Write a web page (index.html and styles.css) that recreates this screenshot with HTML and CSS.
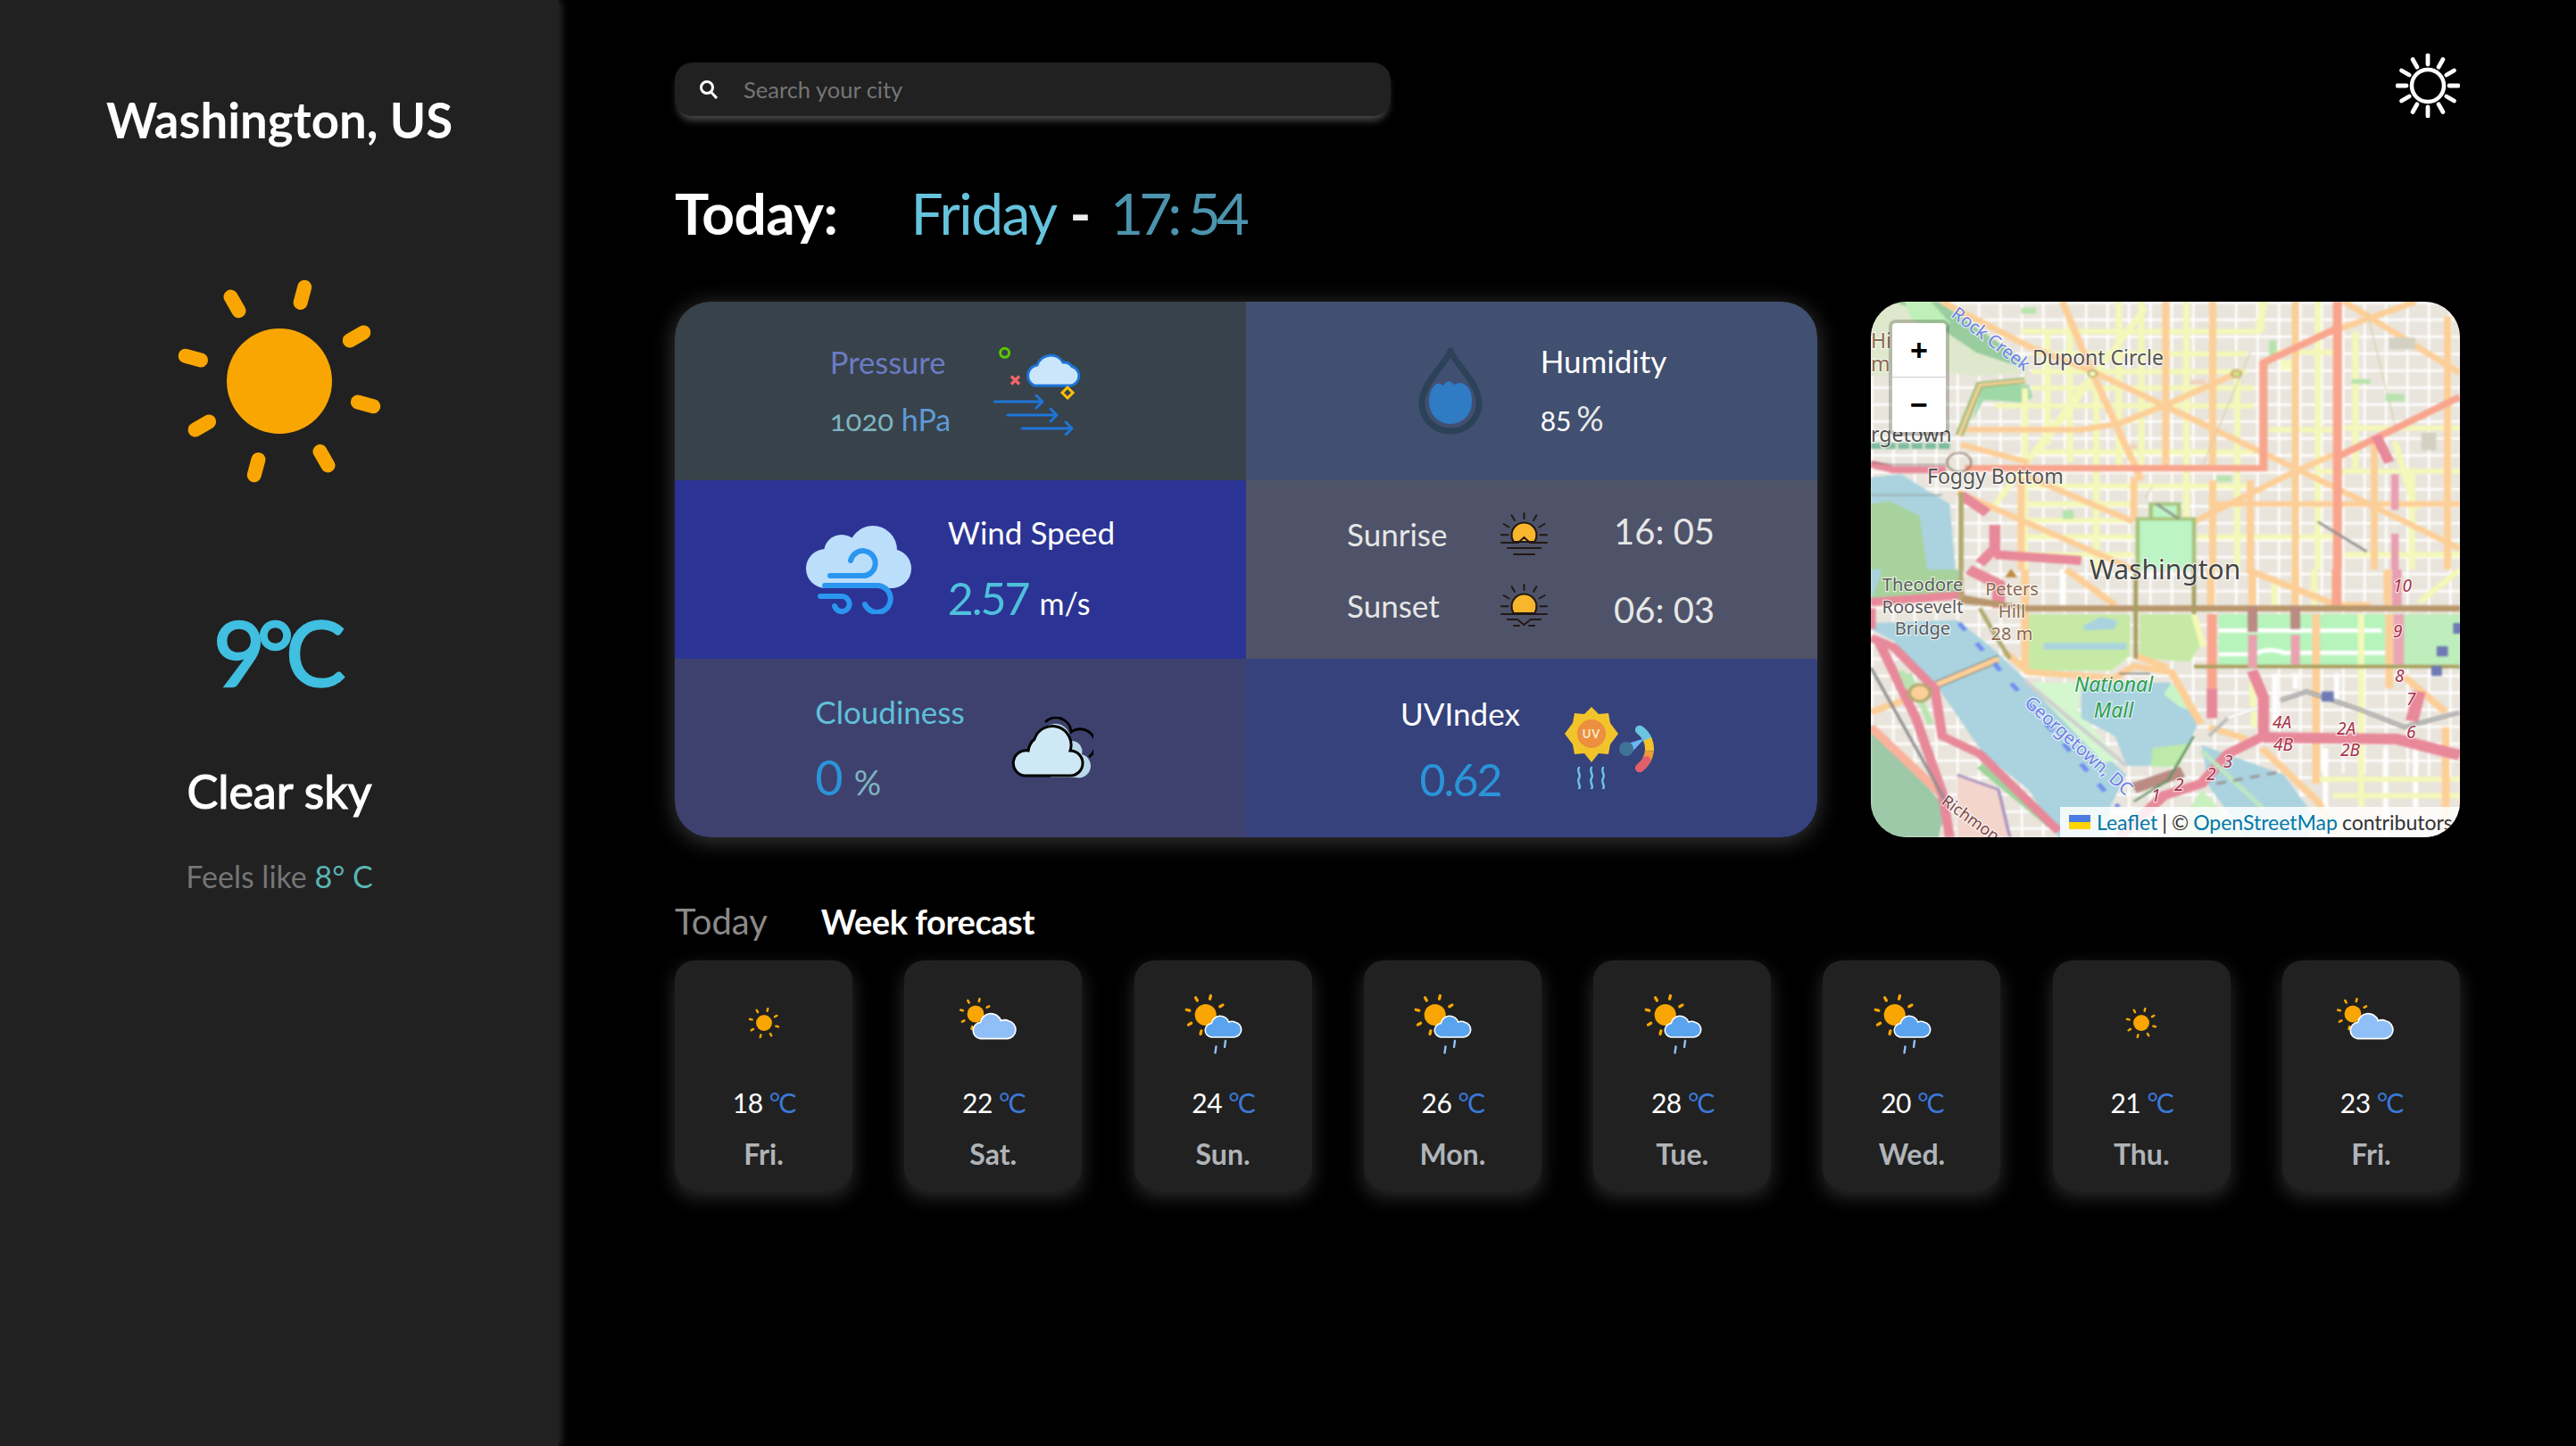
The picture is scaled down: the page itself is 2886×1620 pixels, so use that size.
FILE: index.html
```html
<!DOCTYPE html>
<html lang="en">
<head>
<meta charset="utf-8">
<title>Weather</title>
<link rel="stylesheet" href="styles.css">
</head>
<body>
<svg class="defs" width="0" height="0" aria-hidden="true">
  <defs>
    <symbol id="sun" viewBox="0 0 250 250">
      <circle cx="125" cy="125" r="59" fill="#f9a602"/>
      <g stroke="#f9a602" stroke-width="16" stroke-linecap="round">
        <line x1="125" y1="16" x2="125" y2="34" transform="rotate(15 125 125)"/>
        <line x1="125" y1="16" x2="125" y2="34" transform="rotate(60 125 125)"/>
        <line x1="125" y1="16" x2="125" y2="34" transform="rotate(105 125 125)"/>
        <line x1="125" y1="16" x2="125" y2="34" transform="rotate(150 125 125)"/>
        <line x1="125" y1="16" x2="125" y2="34" transform="rotate(195 125 125)"/>
        <line x1="125" y1="16" x2="125" y2="34" transform="rotate(240 125 125)"/>
        <line x1="125" y1="16" x2="125" y2="34" transform="rotate(285 125 125)"/>
        <line x1="125" y1="16" x2="125" y2="34" transform="rotate(330 125 125)"/>
      </g>
    </symbol>
    <symbol id="wx-clear" viewBox="0 0 86 68">
      <use href="#sun" x="24" y="14" width="38" height="38"/>
    </symbol>
    <symbol id="wx-clouds" viewBox="0 0 86 68">
      <use href="#sun" x="3" y="3" width="40" height="40"/>
      <path transform="translate(-7.2 -7.2) scale(1.18)" d="M30 49H55.5A8.5 8.5 0 0 0 57 32.2 8.5 8.5 0 0 0 49.6 32 10 10 0 0 0 30.3 33.5 7.8 7.8 0 0 0 30 49Z" fill="#90bff7" stroke="#fff" stroke-width="1.4"/>
    </symbol>
    <symbol id="wx-rain" viewBox="0 0 86 68">
      <use href="#sun" x="-1.8" y="-1.5" width="51" height="51"/>
      <path d="M30 49H55.5A8.5 8.5 0 0 0 57 32.2 8.5 8.5 0 0 0 49.6 32 10 10 0 0 0 30.3 33.5 7.8 7.8 0 0 0 30 49Z" fill="#5aa3ee" stroke="#fff" stroke-width="1.6"/>
      <g stroke="#90bff7" stroke-width="2.4" stroke-linecap="round">
        <line x1="46" y1="53" x2="45" y2="60"/>
        <line x1="35.5" y1="59.5" x2="34.5" y2="66.5"/>
      </g>
    </symbol>
    <symbol id="sunhalf" viewBox="0 0 53 48">
      <path d="M14.7 33A14 14 0 1 1 38.300 33Z" fill="#f8b62d" stroke="#231815" stroke-width="2"/>
      <g stroke="#231815" stroke-width="2" stroke-linecap="round">
        <line x1="26.500" y1="1" x2="26.500" y2="7"/>
        <line x1="12.600" y1="3.300" x2="16" y2="9"/>
        <line x1="40.400" y1="3.300" x2="37" y2="9"/>
        <line x1="3.500" y1="13" x2="9.500" y2="16.500"/>
        <line x1="49.500" y1="13" x2="43.500" y2="16.500"/>
        <line x1="0.500" y1="25.300" x2="8.500" y2="25.300"/>
        <line x1="44.500" y1="25.300" x2="52.500" y2="25.300"/>
      </g>
    </symbol>
  </defs>
</svg>

<div class="app">
  <aside class="sidebar">
    <h1 class="city">Washington, US</h1>
    <svg class="hero-sun" width="250" height="250"><use href="#sun"/></svg>
    <div class="hero-temp">9°C</div>
    <div class="hero-desc">Clear sky</div>
    <div class="hero-feels">Feels like <span class="feels-val">8° C</span></div>
  </aside>

  <main class="main">
    <div class="topbar">
      <div class="search">
        <svg class="search-icon" width="22" height="22" viewBox="0 0 22 22" fill="none" stroke="#fff" stroke-width="3"><circle cx="9" cy="9" r="6.500"/><line x1="13.500" y1="14" x2="20" y2="21"/></svg>
        <span class="search-ph">Search your city</span>
      </div>
      <svg class="theme" width="72" height="72" viewBox="0 0 72 72" fill="none" stroke="#fff" stroke-linecap="round">
        <circle cx="36" cy="36" r="18" stroke-width="4.500"/>
        <g stroke-width="4.800">
          <line x1="36" y1="2" x2="36" y2="12"/><line x1="36" y1="60" x2="36" y2="70"/>
          <line x1="2" y1="36" x2="12" y2="36"/><line x1="60" y1="36" x2="70" y2="36"/>
          <line x1="19" y1="6.500" x2="24" y2="15.200"/><line x1="48" y1="56.800" x2="53" y2="65.500"/>
          <line x1="53" y1="6.500" x2="48" y2="15.200"/><line x1="24" y1="56.800" x2="19" y2="65.500"/>
          <line x1="6.500" y1="19" x2="15.200" y2="24"/><line x1="56.800" y1="48" x2="65.500" y2="53"/>
          <line x1="65.500" y1="19" x2="56.800" y2="24"/><line x1="15.200" y1="48" x2="6.500" y2="53"/>
        </g>
      </svg>
    </div>

    <h2 class="today"><span class="today-label">Today:</span><span class="today-day">Friday</span> <span class="today-dash">-</span> <span class="today-time">17: 54</span></h2>

    <section class="panels">
      <div class="metrics">
        <div class="cell c-pressure">
          <div class="stack">
            <div class="label l-indigo">Pressure</div>
            <div class="small"><span class="v-teal">1020</span> <span class="v-sky">hPa</span></div>
          </div>
          <svg width="99" height="100" viewBox="0 0 99 100" fill="none">
            <circle cx="12.600" cy="7.300" r="5" stroke="#5ac800" stroke-width="3"/>
            <path d="M20 34l9 9M29 34l-9 9" transform="translate(0 -.500)" stroke="#f56565" stroke-width="3.200"/>
            <path d="M46 44H86A11 11 0 0 0 88 22.500 11 11 0 0 0 78 18 16 16 0 0 0 49 21 12 12 0 0 0 46 44Z" fill="#cbe6fb" stroke="#1e74d8" stroke-width="3"/>
            <path d="M83 46l6 6-6 6-6-6Z" stroke="#ffc107" stroke-width="3"/>
            <g stroke="#1e74d8" stroke-width="3" stroke-linecap="round" stroke-linejoin="round">
              <path d="M1 62H55M48 55l7 7-7 7"/>
              <path d="M16 77H71M64 70l7 7-7 7"/>
              <path d="M32 92H88M81 85l7 7-7 7"/>
            </g>
          </svg>
        </div>
        <div class="cell c-humidity">
          <svg width="72" height="98" viewBox="0 0 72 98">
            <path d="M36 4C30 20 4 40 4 63A32 31 0 0 0 68 63C68 40 42 20 36 4Z" fill="none" stroke="#2c4258" stroke-width="7" stroke-linejoin="round"/>
            <path d="M17 44C21 39 24 40 28 43 32 37 36 37 40 42 45 39 50 39 55 44 60 50 60 56 60 62A24 24 0 0 1 12 62C12 55 13 49 17 44Z" fill="#2f7bc4"/>
          </svg>
          <div class="stack">
            <div class="label l-white">Humidity</div>
            <div class="small s-white"><span class="num-sm">85</span> <span class="pct">%</span></div>
          </div>
        </div>
        <div class="cell c-wind">
          <svg width="118" height="99" viewBox="0 0 118 99" fill="none">
            <g fill="#bbdefb">
              <circle cx="22" cy="48" r="22"/><circle cx="96" cy="48" r="22"/><circle cx="75" cy="27" r="27"/><circle cx="40" cy="30" r="20"/><rect x="20" y="34" width="78" height="36"/>
            </g>
            <g stroke="#2a96f0" stroke-width="6" stroke-linecap="round">
              <path d="M27 56H62A14 14 0 1 0 50 39"/>
              <path d="M21 67H80A15 15 0 1 1 66 88"/>
              <path d="M16 79H40A8.500 8.500 0 1 1 32 90"/>
            </g>
          </svg>
          <div class="stack">
            <div class="label l-white">Wind Speed</div>
            <div class="big-row"><span class="big v-cyan">2.57</span> <span class="unit-white">m/s</span></div>
          </div>
        </div>
        <div class="cell c-sun">
          <div class="sun-grid">
            <span class="sun-label">Sunrise</span>
            <svg width="53" height="48" viewBox="0 0 53 48" fill="none">
              <use href="#sunhalf" width="53" height="48"/>
              <g stroke="#231815" stroke-width="2" stroke-linecap="round">
                <path d="M1 34H20L26.500 28 33 34H52"/><path d="M8 40H45"/><path d="M15 47H38"/>
              </g>
            </svg>
            <span class="sun-time t-up">16: 05</span>
            <span class="sun-label">Sunset</span>
            <svg width="53" height="48" viewBox="0 0 53 48" fill="none">
              <use href="#sunhalf" width="53" height="48"/>
              <g stroke="#231815" stroke-width="2" stroke-linecap="round">
                <path d="M1 34H52"/><path d="M8 40H19L26.500 46 34 40H45"/><path d="M15 47H21M32 47H38"/>
              </g>
            </svg>
            <span class="sun-time t-down">06: 03</span>
          </div>
        </div>
        <div class="cell c-cloud">
          <div class="stack">
            <div class="label l-cyan">Cloudiness</div>
            <div class="big-row"><span class="big big-zero v-blue">0</span> <span class="unit-teal">%</span></div>
          </div>
          <svg width="92" height="70" viewBox="0 0 92 70">
            <path d="M44 68H72A13 13 0 0 0 79 42 12 12 0 0 0 66 27 17 17 0 0 0 38 12Z" fill="#b9d9e8" stroke="none"/>
            <path d="M38 6A17 17 0 0 1 67 17 13 13 0 0 1 87 45" fill="none" stroke="#000" stroke-width="3"/>
            <path d="M14 66H66A14 14 0 0 0 80 52 14 14 0 0 0 66 38 21 21 0 0 0 26 25 A21 21 0 0 0 19 38 14 14 0 0 0 14 66Z" fill="#cfe8f5" stroke="#000" stroke-width="3"/>
          </svg>
        </div>
        <div class="cell c-uv">
          <div class="stack st-center">
            <div class="label l-white">UVIndex</div>
            <div class="big-row"><span class="big v-blue">0.62</span></div>
          </div>
          <svg width="100" height="92" viewBox="0 0 100 92" fill="none">
            <path d="M30 0 38 8 49 7 51 18 60 30 51 42 49 53 38 52 30 62 22 52 11 53 9 42 0 30 9 18 11 7 22 8Z" fill="#f2c42c"/>
            <circle cx="30" cy="30" r="16" fill="#ec8f3e"/>
            <text class="uv-text" x="30" y="35">UV</text>
            <g stroke-width="10">
              <path d="M83.900 25.700A26 26 0 0 1 92.600 36" stroke="#6cc5e0" stroke-linecap="round"/>
              <path d="M92.600 36A26 26 0 0 1 94.900 49.300" stroke="#f2c42c"/>
              <path d="M94.900 49.300A26 26 0 0 1 91.500 60" stroke="#ef9a3a"/>
              <path d="M91.500 60A26 26 0 0 1 83.900 68.300" stroke="#e0606a" stroke-linecap="round"/>
            </g>
            <path d="M68 42 90 35 73 53Z" fill="#6ab8f0"/>
            <circle cx="69" cy="47" r="8" fill="#3f7398"/>
            <g stroke="#6cc5e8" stroke-width="2.400" stroke-linecap="round">
              <path d="M16 68c-3 4 3 8 0 12s3 8 0 12"/>
              <path d="M30 68c-3 4 3 8 0 12s3 8 0 12"/>
              <path d="M43 68c-3 4 3 8 0 12s3 8 0 12"/>
            </g>
          </svg>
        </div>
      </div>

      <div class="map">
        <svg class="map-art" width="660" height="600" viewBox="0 0 660 600" fill="none">
          <defs>
            <pattern id="streets" width="24" height="19" patternUnits="userSpaceOnUse">
              <rect width="24" height="19" fill="#e9e5dc"/>
              <path d="M0 0H24M0 0V19" stroke="#fff" stroke-width="5"/>
            </pattern>
          </defs>
          <g class="map-shapes">
            <rect width="660" height="600" fill="url(#streets)"/>
            <!-- upper half of the map -->
            <g transform="scale(.4209 .3333)">
              <path d="M0 0H190L400 190 425 240 280 250 210 240 0 250Z" fill="#dfe8cc"/>
              <path d="M60 0H180L400 190 410 225 280 170 210 110 150 40Z" fill="#99cc9e"/>
              <path d="M90 0H160L210 70 190 110 110 60Z" fill="#bff0b8"/>
              <path d="M0 590 80 580 210 680 225 900H0Z" fill="#aad3df"/>
              <path d="M0 680 50 670 130 720 150 900H0Z" fill="#a8d29c"/>
              <path d="M300 280H420L430 320 410 340 300 330 270 400Z" fill="#9fd8a8"/>
              <!-- yellow collector streets -->
              <g stroke="#f4f8b8" stroke-width="17">
                <path d="M410 290V1000M470 100V480M530 60V540M600 270V900M660 0V560M720 0V560M840 0V900M975 260V900M1040 0V100M1190 0V900M1290 100V560M1440 560V900"/>
                <path d="M400 100H1040M430 175H1000M430 235H1000M430 290H1020M330 350H1020M440 505H1020M400 620H1000M400 680H700M400 735H700M400 790H700M420 850H700M1060 170H1240M1190 570H1568M870 790H1240M1260 850H1568M1260 425H1568M1060 430H1240"/>
                <path d="M730 20 440 510M580 260 320 700M1050 0 1030 90M780 350 670 410M1395 470 1450 700"/>
              </g>
              <!-- orange primaries -->
              <g stroke="#fdcf98" stroke-width="19">
                <path d="M190 0 420 150 600 240 1130 560 1568 830"/>
                <path d="M510 0 590 240 720 600"/>
                <path d="M975 240 780 350 660 410 560 430H230"/>
                <path d="M1250 90 1450 0M1260 0 1568 240"/>
                <path d="M785 0V560M910 0V560M1130 0V900M1340 450V900M1535 50V900"/>
                <path d="M240 480 420 540M230 640 700 900M420 590 700 740"/>
                <path d="M860 740 1130 570 1240 510"/>
                <path d="M900 680H1568M400 590V900M700 590V730M910 600V900M1010 600V900"/>
                <path d="M780 350 910 425"/>
              </g>
              <g stroke="#d8c9a2" stroke-width="2.500">
                <path d="M1320 30 1400 440M1010 170 880 560M750 620 730 660"/>
              </g>
              <g fill="#f7fabf" stroke="none">
                <rect x="1090" y="195" width="30" height="35"/>
              </g>
              <g fill="#b7e4ae">
                <rect x="400" y="20" width="40" height="20"/><rect x="1060" y="130" width="20" height="50"/><rect x="1370" y="310" width="50" height="25"/><rect x="920" y="585" width="40" height="20"/><rect x="510" y="700" width="30" height="30"/><rect x="1280" y="260" width="50" height="16"/>
              </g>
              <g fill="#f0d2bd"><rect x="850" y="262" width="40" height="16"/><rect x="690" y="480" width="20" height="16"/></g>
              <g fill="#d4d0c2"><rect x="1380" y="120" width="70" height="40"/><rect x="1465" y="440" width="40" height="60"/></g>
              <path d="M1568 320 1245 520" stroke="#f9a58e" stroke-width="22"/>
              <path d="M250 560H1045V205L1240 90" stroke="#f9a58e" stroke-width="22"/>
              <path d="M1242 0V900" stroke="#f9a58e" stroke-width="24"/>
              <path d="M0 545 60 565H200" stroke="#e8899a" stroke-width="24"/>
              <path d="M0 540 60 548H200" stroke="#555" stroke-width="2"/>
              <path d="M240 650 310 710" stroke="#e8899a" stroke-width="30"/>
              <path d="M330 750V830L290 880M330 850 560 870" stroke="#e8899a" stroke-width="30"/>
              <path d="M1345 450 1380 540" stroke="#e8899a" stroke-width="28"/>
              <path d="M1395 580V700M1395 780V900" stroke="#e8a0b0" stroke-width="20"/>
              <path d="M0 485H210" stroke="#7dbc9d" stroke-width="20" stroke-dasharray="30 6"/>
              <path d="M0 650H190" stroke="#9aa" stroke-width="5"/>
              <path d="M240 640V900" stroke="#b1ab71" stroke-width="14"/>
              <path d="M235 450 290 280 410 265" stroke="#a3bf7d" stroke-width="22"/>
              <path d="M235 450 290 280 410 265" stroke="#fdcf98" stroke-width="8"/>
              <path d="M710 730H860V900H710Z" fill="#bdf4c5"/>
              <path d="M745 680H820V730H745Z" fill="#bdf4c5"/>
              <path d="M710 900V730H860V900M745 730V680H820V730" stroke="#a8c47c" stroke-width="11"/>
              <path d="M760 680 820 730M1190 740 1320 840" stroke="#8d8d8d" stroke-width="7"/>
              <circle cx="590" cy="242" r="11" fill="#f4f8b8" stroke="#a8a060" stroke-width="4"/>
              <circle cx="973" cy="242" r="13" fill="#d2dc8a" stroke="#c9a96a" stroke-width="5"/>
              <circle cx="235" cy="540" r="32" stroke="#8a6a5a" stroke-width="4"/>
            </g>
            <!-- lower half of the map -->
            <g transform="translate(0 300) scale(.4209 .3333)">
              <path d="M0 0H240V100L0 110Z" fill="#aad3df"/>
              <path d="M30 0H230L240 80 0 110Z" fill="#a8d29c"/>
              <path d="M0 180 230 170 320 260 420 380 680 690 640 790 620 900H500L420 740 300 620 180 400 60 240 0 200Z" fill="#aad3df"/>
              <path d="M0 520 200 800 180 900H0Z" fill="#9dc9a8"/>
              <path d="M230 690 340 740 370 900H230Z" fill="#f3d5cc"/>
              <path d="M230 690 340 740 370 900" stroke="#a991c0" stroke-width="8"/>
              <path d="M290 660 480 860" stroke="#9fd39a" stroke-width="22"/>
              <path d="M420 150H690V290L640 340H420Z" fill="#c6eaa5"/>
              <path d="M715 150H860L880 250 850 310 715 300Z" fill="#c6eaa5"/>
              <path d="M565 190 610 160 655 170 650 200 570 205Z" fill="#aad3df"/>
              <path d="M460 258H680" stroke="#aad3df" stroke-width="22"/>
              <path d="M925 150H1370V320H925Z" fill="#b6f4bb"/>
              <path d="M1370 150H1568V320H1370Z" fill="#bdeebb"/>
              <path d="M430 380H560L550 470 660 640 620 650 430 400Z" fill="#d4f7d0"/>
              <path d="M560 380H800L870 520 820 660H680L650 560 560 500Z" fill="#aad3df"/>
              <path d="M750 600 850 585 820 662H745Z" fill="#bdeaa8"/>
              <path d="M800 380 860 480 820 460 780 420Z" fill="#c9f5c6"/>
              <path d="M880 590 1100 690 1180 830 1170 900H1000L900 730Z" fill="#aad3df"/>
              <path d="M800 900 880 740 1000 900Z" fill="#c9f0bf"/>
              <path d="M1180 680 1568 700V900H1170Z" fill="#e9e5dc"/>
              <g stroke="#fff" stroke-width="14">
                <path d="M925 205H1360M925 285H1020Q1060 260 1100 280H1370"/>
                <path d="M1075 350V540M1240 350V440M1130 350V400M1210 600V900M1370 600V900M1450 600V800M510 0V120"/>
              </g>
              <g stroke="#f4f8b8" stroke-width="17">
                <path d="M1015 380 1020 530M1305 150V800M1190 705H1568M1230 760H1568M1460 110 1568 0M1075 30V120M1180 0V120M860 150 885 260"/>
              </g>
              <g stroke="#fdcf98" stroke-width="21">
                <path d="M360 280 420 345 650 365 700 325 800 345 860 480 880 520"/>
                <path d="M705 290 790 330M170 390 340 300M410 0V340M520 0 650 120M1000 0 1240 120 1330 120"/>
                <path d="M1130 0V120M905 0V120M1015 0V120M1375 0V120M1185 150V720M1380 150V400M1420 360 1530 480"/>
                <path d="M1040 600 1190 780 1240 900M900 530 1000 570M0 480 130 420M1530 530V900"/>
              </g>
              <path d="M170 378 340 288M170 402 340 312" stroke="#555" stroke-width="2"/>
              <path d="M0 530 200 770" stroke="#f9b29c" stroke-width="26"/>
              <path d="M908 150V400" stroke="#f9a58e" stroke-width="26"/>
              <path d="M1240 0V120" stroke="#f9a58e" stroke-width="26"/>
              <path d="M908 400V500" stroke="#e8899a" stroke-width="28"/>
              <path d="M1015 340 1045 430V560L950 620 880 720 780 760 660 900" stroke="#e8899a" stroke-width="30"/>
              <path d="M1045 565 1400 570 1568 625" stroke="#e8899a" stroke-width="36"/>
              <path d="M1400 0V120" stroke="#e8a0b0" stroke-width="26"/>
              <path d="M1405 150V320" stroke="#eba6b6" stroke-width="28"/>
              <path d="M1460 410 1440 510" stroke="#e8899a" stroke-width="34"/>
              <path d="M0 230 60 260 170 400 190 560 290 620 500 880" stroke="#e8899a" stroke-width="26"/>
              <path d="M20 240 120 500 190 750 210 900" stroke="#e8899a" stroke-width="26"/>
              <path d="M0 110 250 85" stroke="#e8899a" stroke-width="28"/>
              <path d="M0 200V130" stroke="#e8899a" stroke-width="26"/>
              <path d="M260 0 340 50V130" stroke="#e8899a" stroke-width="34"/>
              <path d="M100 350 160 520M100 400 80 340" stroke="#b9e4b0" stroke-width="16"/>
              <path d="M410 131H1568" stroke="#b8966c" stroke-width="20"/>
              <path d="M240 90 420 130 240 110Z" fill="#b8966c" stroke="#b8966c" stroke-width="10"/>
              <path d="M860 326H1568" stroke="#a8a060" stroke-width="12"/>
              <path d="M705 0V300M860 0V150" stroke="#a8a060" stroke-width="11"/>
              <path d="M240 0V100M290 130 340 240 370 300" stroke="#b1ab71" stroke-width="12"/>
              <path d="M1016 125V210M1130 125V200" stroke="#b98b83" stroke-width="26"/>
              <path d="M1016 220V330M1130 220V320" stroke="#eaa2b1" stroke-width="24"/>
              <path d="M700 735 830 680" stroke="#b98b83" stroke-width="36"/>
              <path d="M860 560 790 710 700 780" stroke="#5e8f5e" stroke-width="6"/>
              <path d="M410 375 680 660" stroke="#cfcfcf" stroke-width="12"/>
              <path d="M0 330 200 780" stroke="#8f8f8f" stroke-width="8"/>
              <path d="M880 610 1050 810" stroke="#bfe6c3" stroke-width="14"/>
              <path d="M1090 440 1160 410 1300 470 1420 530 1568 480" stroke="#8d8d8d" stroke-width="13"/>
              <path d="M1090 440 1160 410 1300 470 1420 530 1568 480" stroke="#eee" stroke-width="4"/>
              <path d="M900 560 950 500 1030 465" stroke="#bdbdbd" stroke-width="11"/>
              <path d="M950 500 1030 465" stroke="#fff" stroke-width="9"/>
              <path d="M920 720 1090 680" stroke="#9a9a9a" stroke-width="9" stroke-dasharray="26 20"/>
              <path d="M235 180 660 800" stroke="#6f8ff0" stroke-width="13" stroke-dasharray="30 52"/>
              <circle cx="130" cy="415" r="28" fill="#fdcf98" stroke="#b1ab71" stroke-width="9"/>
              <path d="M660 350H745" stroke="#666" stroke-width="4"/>
              <g fill="#6f7ab5">
                <rect x="1200" y="410" width="32" height="34"/><rect x="1550" y="180" width="22" height="36"/><rect x="1506" y="258" width="30" height="34"/><rect x="1492" y="324" width="28" height="34"/>
              </g>
              <path d="M373 -2 390 26H357Z" fill="#c08a3e"/>
            </g>
          </g>
          <g class="mlabel">
            <text class="ml-peak-small" x="0" y="52">Hi</text>
            <text class="ml-peak-small" x="0" y="78">m</text>
            <text x="181" y="71">Dupont Circle</text>
            <text x="63" y="204">Foggy Bottom</text>
            <text x="0" y="157">rgetown</text>
            <text class="ml-big" x="245" y="311">Washington</text>
            <g class="ml-mid">
              <text x="58" y="324">Theodore</text>
              <text x="58" y="349">Roosevelt</text>
              <text x="58" y="373">Bridge</text>
            </g>
            <g class="ml-peak">
              <text x="158" y="329">Peters</text>
              <text x="158" y="354">Hill</text>
              <text x="158" y="379">28 m</text>
            </g>
            <g class="ml-park">
              <text x="272" y="437">National</text>
              <text x="272" y="466">Mall</text>
            </g>
            <text class="ml-water" transform="translate(171 451) rotate(42)">Georgetown, DC</text>
            <text class="ml-water" transform="translate(89 16) rotate(37)">Rock Creek</text>
            <text class="ml-road" transform="translate(78 562) rotate(36)">Richmond</text>
            <g class="ml-exit">
              <text x="585" y="325">10</text><text x="585" y="376">9</text><text x="587" y="426">8</text><text x="600" y="452">7</text><text x="600" y="489">6</text>
              <text x="450" y="478">4A</text><text x="451" y="503">4B</text><text x="522" y="485">2A</text><text x="526" y="509">2B</text>
              <text x="395" y="522">3</text><text x="376" y="536">2</text><text x="340" y="548">2</text><text x="314" y="560">1</text>
            </g>
          </g>
        </svg>
        <div class="zoom-ctl">
          <span class="zoom-btn zoom-in">+</span>
          <span class="zoom-btn">−</span>
        </div>
        <div class="attrib">
          <svg class="flag" width="24" height="16" viewBox="0 0 24 16"><rect width="24" height="8" fill="#4c7be1"/><rect y="8" width="24" height="8" fill="#ffd500"/></svg>
          <a class="attr-link">Leaflet</a><span class="attr-sep">|</span><span>©</span> <a class="attr-link">OpenStreetMap</a> <span>contributors</span>
        </div>
      </div>
    </section>

    <div class="tabs">
      <span class="tab">Today</span>
      <span class="tab tab-on">Week forecast</span>
    </div>

    <section class="week">
      <article class="day"><svg class="wx"><use href="#wx-clear"/></svg><div class="temp">18 <span class="deg">°C</span></div><div class="dname">Fri.</div></article>
      <article class="day"><svg class="wx"><use href="#wx-clouds"/></svg><div class="temp">22 <span class="deg">°C</span></div><div class="dname">Sat.</div></article>
      <article class="day"><svg class="wx"><use href="#wx-rain"/></svg><div class="temp">24 <span class="deg">°C</span></div><div class="dname">Sun.</div></article>
      <article class="day"><svg class="wx"><use href="#wx-rain"/></svg><div class="temp">26 <span class="deg">°C</span></div><div class="dname">Mon.</div></article>
      <article class="day"><svg class="wx"><use href="#wx-rain"/></svg><div class="temp">28 <span class="deg">°C</span></div><div class="dname">Tue.</div></article>
      <article class="day"><svg class="wx"><use href="#wx-rain"/></svg><div class="temp">20 <span class="deg">°C</span></div><div class="dname">Wed.</div></article>
      <article class="day"><svg class="wx"><use href="#wx-clear"/></svg><div class="temp">21 <span class="deg">°C</span></div><div class="dname">Thu.</div></article>
      <article class="day"><svg class="wx"><use href="#wx-clouds"/></svg><div class="temp">23 <span class="deg">°C</span></div><div class="dname">Fri.</div></article>
    </section>
  </main>
</div>
</body>
</html>
```

FILE: styles.css
```css
* { box-sizing: border-box; }
html, body { margin: 0; height: 100%; background: #000; }
body { font-family: Lato, "Open Sans", sans-serif; color: #fff; overflow: hidden; }
.defs { position: absolute; }
.app { display: flex; height: 1620px; }

/* sidebar */
.sidebar {
  width: 626px; flex: none; background: #212121;
  box-shadow: 3px 0 8px #2b2b2b;
  display: flex; flex-direction: column; align-items: center;
  padding-top: 101px;
}
.city { margin: 0; font-size: 54.5px; line-height: 67px; font-weight: 700; }
.hero-sun { margin-top: 134px; display: block; }
.hero-temp { margin-top: 118px; font-size: 100px; line-height: 120px; font-weight: 400; -webkit-text-stroke: 2.5px #40bfe0; letter-spacing: -9px; padding-right: 9px; color: #40bfe0; }
.hero-desc { margin-top: 63px; font-size: 52px; line-height: 67px; font-weight: 400; -webkit-text-stroke: 1.2px #fff; }
.hero-feels { margin-top: 40px; font-size: 34px; line-height: 43px; color: #757575; }
.feels-val { color: #5ab4b4; }

/* main */
.main { width: 2260px; padding: 60px 130px 0; }
.topbar { display: flex; justify-content: space-between; align-items: flex-start; height: 72px; }
.search {
  margin-top: 10px; width: 802px; height: 60px; border-radius: 20px; background: #212121;
  box-shadow: 0 8px 8px -3px #4a4a4a;
  display: flex; align-items: center; padding-left: 27px; gap: 28px;
}
.search-icon { flex: none; }
.search-ph { font-size: 25.500px; color: #757575; }
.today { margin: 69px 0 0; font-size: 64px; line-height: 76px; font-weight: 700; white-space: nowrap; letter-spacing: -.5px; }
.today-label { margin-right: 82px; }
.today-day { color: #66c3dd; font-weight: 400; letter-spacing: -1.500px; }
.today-dash { color: #eee; }
.today-time { color: #4c93ad; font-weight: 400; letter-spacing: -5px; margin-left: 7px; }

/* metrics */
.panels { margin-top: 61px; display: flex; gap: 60px; }
.metrics {
  width: 1280px; height: 600px; border-radius: 40px; overflow: hidden;
  display: grid; grid-template-columns: 640px 640px; grid-template-rows: 200px 200px 200px;
  box-shadow: 0 4px 26px #3c3c3c;
}
.cell { display: flex; align-items: center; justify-content: center; }
.c-pressure { background: #37424a; gap: 48px; padding-right: 10px; }
.c-humidity { background: #414f70; gap: 65px; padding-left: 24px; }
.c-wind { background: #2b3494; gap: 41px; }
.c-sun { background: #4e5369; }
.c-cloud { background: #3e416e; gap: 52px; padding-right: 14px; }
.c-uv { background: #36427c; gap: 50px; padding-right: 10px; }
.stack { display: flex; flex-direction: column; gap: 21px; }
.st-center { align-items: center; }
.label { font-size: 35px; line-height: 43px; white-space: nowrap; }
.l-indigo { color: #6b7bc4; font-size: 34.500px; }
.l-white { color: #fff; }
.l-cyan { color: #5fc0d8; }
.small { font-size: 34px; line-height: 43px; white-space: nowrap; font-variant-numeric: oldstyle-nums; }
.s-white { color: #e8e8e8; }
.num-sm { font-size: 30px; color: #fff; font-variant-numeric: lining-nums; }
.pct { font-size: 38px; margin-left: -3px; }
.v-teal { color: #7fb3c0; font-size: 33px; }
.v-sky { color: #5f9ad8; }
.big-row { display: flex; align-items: baseline; gap: 12px; white-space: nowrap; line-height: 50px; margin-top: 6px; }
.big { font-size: 50px; letter-spacing: -2px; }
.big-zero { font-size: 54px; letter-spacing: 0; }
.v-cyan { color: #4fc0dc; }
.v-blue { color: #2a94d8; }
.unit-white { font-size: 34px; color: #fff; }
.unit-teal { font-size: 38px; color: #7fb3c0; }
.sun-grid { display: grid; grid-template-columns: 172px 127px 115px; grid-template-rows: 80px 80px; align-items: center; }
.sun-label { font-size: 35px; color: #e6e6e6; }
.sun-time { font-size: 40px; color: #e6e6e6; white-space: nowrap; }
.t-up { margin-bottom: 6px; }
.t-down { margin-top: 10px; }
.uv-text { font: 700 13px Lato, sans-serif; fill: #f8ecd0; text-anchor: middle; letter-spacing: 1px; }

/* map */
.map { position: relative; width: 660px; height: 600px; border-radius: 40px; overflow: hidden; background: #eeebe4; }
.map-art { display: block; }
.map-shapes { filter: blur(.8px); }
.mlabel text { font-family: "Noto Sans", sans-serif; font-size: 23px; fill: #555; paint-order: stroke; stroke: rgba(255,255,255,.65); stroke-width: 2.5px; }
.mlabel .ml-big { font-size: 30px; fill: #444; }
.mlabel .ml-peak-small { fill: #8c6a50; }
.ml-mid text { font-size: 20px; text-anchor: middle; fill: #5a5a5a; }
.ml-peak text { font-size: 20px; text-anchor: middle; fill: #8c6a50; }
.ml-park text { font-size: 23px; font-style: italic; text-anchor: middle; fill: #2c9e50; }
.mlabel .ml-water { font-size: 20px; fill: #6f80e8; }
.mlabel .ml-road { font-size: 18px; fill: #7a4a4a; }
.ml-exit text { font-size: 19px; font-style: italic; fill: #a8324a; }
.zoom-ctl {
  position: absolute; left: 24px; top: 24px; width: 60px; height: 122px;
  background: #fff; border-radius: 4px; box-shadow: 0 0 0 4px rgba(0,0,0,.2);
  display: flex; flex-direction: column;
}
.zoom-btn { height: 61px; display: flex; align-items: center; justify-content: center; font: 700 34px "Liberation Sans", sans-serif; color: #000; }
.zoom-in { border-bottom: 1px solid #ccc; }
.attrib {
  position: absolute; right: 0; bottom: 0; width: 448px; height: 34px;
  background: rgba(255,255,255,.85); color: #333; font-size: 23px; line-height: 32px;
  display: flex; align-items: center; padding-left: 10px; gap: 5px; white-space: nowrap;
}
.flag { flex: none; margin-right: 2px; }
.attr-link { color: #0078a8; }

/* tabs and week */
.tabs { margin-top: 70px; display: flex; gap: 60px; font-size: 40px; line-height: 48px; }
.tab { color: #8a8a8a; }
.tab-on { color: #fff; font-weight: 700; font-size: 38px; letter-spacing: -.45px; }
.week { margin-top: 20px; display: flex; justify-content: space-between; }
.day {
  width: 199px; height: 256px; background: #212121; border-radius: 22px;
  box-shadow: 0 8px 22px #2e2e2e;
  display: flex; flex-direction: column; align-items: center; padding-top: 37px;
}
.wx { width: 86px; height: 68px; display: block; }
.temp { margin-top: 35px; font-size: 30px; line-height: 38px; color: #fff; white-space: nowrap; letter-spacing: -.5px; }
.deg { color: #3a78d8; letter-spacing: -2px; }
.dname { margin-top: 20px; font-size: 32px; line-height: 38px; font-weight: 700; color: #b0b4b8; }
```
